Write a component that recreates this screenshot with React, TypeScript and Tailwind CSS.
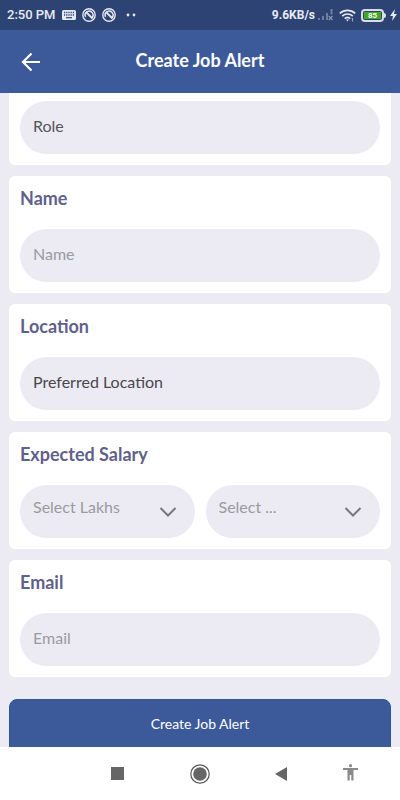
import React from "react";

const FIELD =
  "block h-[53px] w-full appearance-none rounded-full bg-[#ecebf4] px-[13px] text-base outline-none";

function Card({ label, id, children }: { label: string; id: string; children: React.ReactNode }) {
  return (
    <section className="rounded-md bg-white p-[11px]">
      <label htmlFor={id} className="mb-[20px] block text-lg leading-[22px] font-bold text-[#615f8b]">
        {label}
      </label>
      {children}
    </section>
  );
}

function SalarySelect({ id, label, text }: { id: string; label: string; text: string }) {
  return (
    <div className="relative min-w-0 flex-1">
      <select id={id} aria-label={label} className={`${FIELD} pb-[9px] text-[#9b9a9e]`}>
        <option>{text}</option>
      </select>
      <svg
        className="pointer-events-none absolute top-[22px] right-[18px] h-[12px] w-[18px]"
        viewBox="0 0 18 12"
        fill="none"
        stroke="#77767b"
        strokeWidth="2"
      >
        <path d="M1.5 1 9 8.5 16.500 1" />
      </svg>
    </div>
  );
}

function Blocked() {
  return (
    <svg className="h-[14px] w-[14px]" viewBox="0 0 14 14" fill="none" stroke="#e4e8f1">
      <circle cx="7" cy="7" r="6.2" strokeWidth="1.4" />
      <path d="M3.6 8.800a3.900 3.900 0 1 1 5.800 1.400" strokeWidth="1.5" />
      <path d="m4 4 6.500 6.500" strokeWidth="1.8" />
    </svg>
  );
}

function StatusBar() {
  return (
    <div className="flex h-[30px] shrink-0 items-center justify-between bg-[#2d4373] pr-[3px] pl-[7px] font-[Roboto,sans-serif] text-[#e8ebf2]">
      <div className="flex items-center gap-[6px]">
        <span className="text-[13px] leading-4 font-medium">2:50 PM</span>
        <svg className="h-[10px] w-[14px]" viewBox="0 0 14 10">
          <rect width="14" height="10" rx="1.5" fill="#e4e8f1" />
          <path d="M2 2.5h10M2 5h10" stroke="#2d4373" strokeWidth="1.3" strokeDasharray="1.2 1" />
          <path d="M4 7.7h6" stroke="#2d4373" strokeWidth="1.2" />
        </svg>
        <Blocked />
        <Blocked />
        <svg className="ml-[4px] h-[4px] w-[10px]" viewBox="0 0 10 4" fill="#e4e8f1">
          <circle cx="2" cy="2" r="1.400" />
          <circle cx="8" cy="2" r="1.400" />
        </svg>
      </div>
      <div className="flex items-center gap-[3px]">
        <span className="text-xs leading-4 font-bold">9.6KB/s</span>
        <svg className="h-[12px] w-[15px]" viewBox="0 0 15 12" fill="#6f7e9f">
          <path d="M0 9h2v2H0zM4 7h2v4H4zM8 4h2v7H8zM12.500 0h2v5.500h-2z" />
          <path d="m10.800 7 3.700 4m0-4-3.700 4" fill="none" stroke="#8b97b2" strokeWidth="1.2" />
        </svg>
        <svg className="ml-[3px] h-[13px] w-[17px]" viewBox="0 0 17 13" fill="none" stroke="#e4e8f1" strokeWidth="1.7">
          <path d="M.8 4.4c4.4-4 11-4 15.4 0M3.2 7.1c3-2.8 7.6-2.8 10.6 0M5.7 9.6c1.6-1.5 4-1.5 5.6 0" />
          <path d="M7 10.5h3L8.500 12.500z" fill="#e4e8f1" stroke="none" />
          <path d="M13.500 9v3.500" strokeWidth="1.200" stroke="#9aa6c0" />
        </svg>
        <div className="ml-[2px] flex items-center">
          <div className="flex h-[13px] w-[23px] items-center justify-center rounded-[4px] border-2 border-[#d8dde8] bg-[#2d4373] p-px">
            <span className="w-full bg-[#43a91c] text-center text-[8px] leading-[7px] font-bold text-white">85</span>
          </div>
          <div className="h-[5px] w-[2px] rounded-r-sm bg-[#d8dde8]" />
        </div>
        <svg className="ml-px h-[12px] w-[7px]" viewBox="0 0 7 12" fill="#e4e8f1">
          <path d="M5 0 0 7h3L2 12l5-7H4z" />
        </svg>
      </div>
    </div>
  );
}

export default function App() {
  return (
    <div className="flex h-screen flex-col bg-[#ecebf4] font-[Lato,Carlito,sans-serif]">
      <StatusBar />
      <header className="grid h-[63px] shrink-0 grid-cols-[1fr_auto_1fr] items-center bg-[#3c5a99] px-[21px] text-white">
        <button type="button" aria-label="Back" className="w-[20px]">
          <svg className="h-[20px] w-[20px]" viewBox="0 0 20 20" fill="none" stroke="white" strokeWidth="2.2">
            <path d="M19 10H2.500M10.500 1.500 2 10l8.500 8.500" />
          </svg>
        </button>
        <h1 className="pb-1 text-lg leading-6 font-bold">Create Job Alert</h1>
      </header>

      <main className="min-h-0 flex-1 overflow-y-auto [scrollbar-width:none]">
        <form className="flex flex-col gap-[11px] px-[9px]">
          <section className="rounded-b-md bg-white px-[11px] pt-[8px] pb-[11px]">
            <input aria-label="Role" placeholder="Role" className={`${FIELD} pb-1 placeholder:text-[#565559]`} />
          </section>
          <Card label="Name" id="name">
            <input id="name" placeholder="Name" className={`${FIELD} pb-1 placeholder:text-[#9b9a9e]`} />
          </Card>
          <Card label="Location" id="location">
            <input
              id="location"
              placeholder="Preferred Location"
              className={`${FIELD} pb-1 placeholder:text-[#48474b]`}
            />
          </Card>
          <Card label="Expected Salary" id="lakhs">
            <div className="flex gap-[11px]">
              <SalarySelect id="lakhs" label="Lakhs" text="Select Lakhs" />
              <SalarySelect id="thousands" label="Thousands" text="Select ..." />
            </div>
          </Card>
          <Card label="Email" id="email">
            <input
              id="email"
              type="email"
              placeholder="Email"
              className={`${FIELD} pb-1 placeholder:text-[#9b9a9e]`}
            />
          </Card>
          <button
            type="button"
            className="mt-[11px] h-[50px] shrink-0 rounded-t-lg border border-[#2f5596] bg-[#3c5a99] text-sm text-white"
          >
            Create Job Alert
          </button>
        </form>
      </main>

      <nav className="grid h-[53px] shrink-0 grid-cols-[82fr_83fr_80fr_58fr] items-center justify-items-center bg-white pr-[21px] pl-[76px]">
        <button type="button" aria-label="Recent apps">
          <svg className="h-[13px] w-[13px]" viewBox="0 0 13 13" fill="#666">
            <rect width="13" height="13" />
          </svg>
        </button>
        <button type="button" aria-label="Home">
          <svg className="h-[20px] w-[20px]" viewBox="0 0 20 20">
            <circle cx="10" cy="10" r="9.200" fill="none" stroke="#555" strokeWidth="1.200" />
            <circle cx="10" cy="10" r="6.800" fill="#666" />
          </svg>
        </button>
        <button type="button" aria-label="Go back">
          <svg className="h-[14px] w-[12px]" viewBox="0 0 12 14" fill="#666">
            <path d="M12 0v14L0 7z" />
          </svg>
        </button>
        <button type="button" aria-label="Accessibility" className="pb-[2px]">
          <svg className="h-[17px] w-[15px]" viewBox="0 0 15 17" fill="#8a8a8a">
            <circle cx="7.500" cy="1.700" r="1.600" />
            <path d="M0 4h15v2h-4.500v10.500H8.300V11H6.700v5.500H4.500V6H0z" />
          </svg>
        </button>
      </nav>
    </div>
  );
}
